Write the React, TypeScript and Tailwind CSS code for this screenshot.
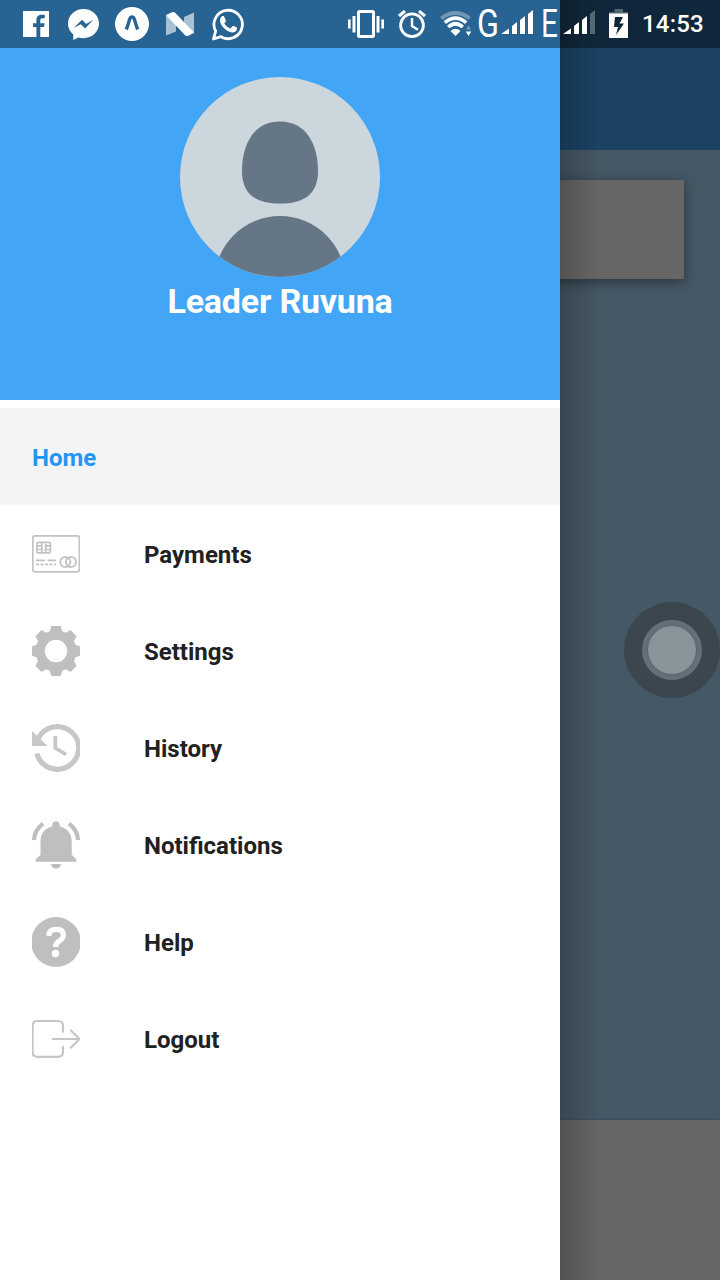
import type { ReactNode } from "react";

type GlyphProps = { box: string; className: string; children: ReactNode };

function Glyph({ box, className, children }: GlyphProps) {
  return (
    <svg viewBox={box} className={`shrink-0 ${className}`} fill="none" aria-hidden="true">
      {children}
    </svg>
  );
}

function StatusBar() {
  return (
    <header className="absolute inset-x-0 top-0 z-30 flex h-12 items-center bg-black/40 text-white">
      <Glyph box="0 0 26 26" className="ml-[23px] size-[26px]">
        <path fill="#fff" d="M0 0H26V26H17.3V16H21L21.6 12.2H17.3V9.4C17.3 8 18 7.3 19.5 7.3H21.8V4.1C21 3.9 20 3.8 18.8 3.8C15.5 3.8 13.4 5.7 13.4 9V12.2H10V16H13.4V26H0Z" />
      </Glyph>
      <Glyph box="0 0 31 31" className="ml-[19px] mt-px h-[31px] w-[31px]">
        <path fill="#fff" fillRule="evenodd" d="M15.5 0C24 0 31 6.3 31 14.6S24 29.2 15.5 29.2C13.6 29.2 12 28.9 10.4 28.4L5.3 31V25.6C2 23 0 19 0 14.6C0 6.3 7 0 15.5 0ZM5.8 18.8L14 10.8L18.2 15L25.2 10.8L17.1 19.5L12.8 15.2Z" />
      </Glyph>
      <Glyph box="0 0 34 34" className="ml-4 size-[34px]">
        <circle cx="17" cy="17" r="17" fill="#fff" />
        <path d="M11.300 22.500C13.500 17.500 14 12.500 15.500 10.500Q17 9.300 18.500 10.500C20 12.500 20.500 17.500 22.700 22.500" stroke="#286393" strokeWidth="3.4" strokeLinejoin="round" />
      </Glyph>
      <Glyph box="0 0 28 25" className="ml-[17px] h-[25px] w-7">
        <path fill="#a9c1d4" d="M0 3L10 8V19.500L0 23.500ZM18 5L28 .5V22L18 16Z" />
        <path fill="#fff" d="M0 3L6 .3Q8-.4 9.600 1.200L28 20.500L23 23.500Q20.600 24.800 18.800 23Z" />
      </Glyph>
      <Glyph box="0 0 34 34" className="-mt-px ml-[17px] size-[34px]">
        <path d="M2.500 32L4.700 24.200A14.200 14.200 0 1 1 10 29.700Z" stroke="#fff" strokeWidth="2.800" strokeLinejoin="round" />
        <path fill="#fff" d="M12 9C13 9 13.2 9.4 14.8 13.4C15 14.2 14.3 15 13.3 16.2C15 19.2 17.2 20.6 19.4 21.5L21.5 19.2C22 18.7 22.4 18.7 25.700 20.500C26.600 21 25.700 23.800 24.200 24.700C21.500 26.300 18.300 25.200 14.900 22.700C11.500 20 9 16.500 9 13.400C9 11 10.400 9 12 9Z" />
      </Glyph>

      <Glyph box="0 0 36 28" className="ml-[103px] h-7 w-9">
        <path fill="#fff" d="M4.500 6H7.500V22.500H4.500ZM28.500 6H31.500V22.500H28.500Z" />
        <path fill="#fff" d="M0 9.500H2.700V18.500H0ZM33.300 9.500H36V18.500H33.300Z" />
        <rect x="10.500" y="1.600" width="15" height="24.800" rx="1" stroke="#fff" strokeWidth="3" />
      </Glyph>
      <Glyph box="0 0 28 28" className="ml-3.5 size-7">
        <circle cx="14" cy="15.200" r="11.400" stroke="#fff" strokeWidth="2.800" />
        <path d="M14 8V16L20 19.700" stroke="#fff" strokeWidth="2.400" />
        <path d="M1 6L7 1M21 1L27 6" stroke="#fff" strokeWidth="3" />
      </Glyph>
      <Glyph box="0 0 32 26" className="ml-3.5 h-[26px] w-8">
        <path d="M1.300 7.300Q15.500-3.300 29.700 7.300" stroke="#7197b6" strokeWidth="4" />
        <path d="M4.800 11.600Q15.500 2.700 26.200 11.600M8.200 16Q15.500 9.500 22.800 16" stroke="#fff" strokeWidth="3.600" />
        <path d="M10.500 20Q15.500 15.500 20.500 20L15.500 25Z" fill="#fff" />
        <path d="M25.800 18.500L28.500 14.500L31.200 18.500Z" fill="#7197b6" />
        <path d="M25.800 20.500H31.200L28.500 25Z" fill="#fff" />
      </Glyph>
      <span className="-mr-0.5 ml-[5px] w-[26px] origin-left scale-x-[.85] text-[38px] leading-[48px]">G</span>
      <Glyph box="0 0 33 25" className="mb-1 h-[25px] w-[33px]">
        <path fill="#fff" d="M0 24L8 18.500V24ZM11 16L16 12V24H11ZM19 10L24 6V24H19ZM27 4L32 0V24H27Z" />
      </Glyph>
      <span className="ml-[7px] w-[22px] origin-left scale-x-[.78] text-[38px] leading-[48px]">E</span>
      <Glyph box="0 0 32 25" className="mb-1 h-[25px] w-8">
        <path fill="#fff" d="M0 24L8 18.500V24ZM11 16L16 12V24H11ZM19 10L24 6V24H19Z" />
        <path fill="#576873" d="M27 4L32 0V24H27Z" />
      </Glyph>
      <Glyph box="0 0 19 29" className="-mt-px ml-3.5 h-[29px] w-[19px]">
        <path fill="#536571" d="M5.500 0H14V3H19V5H0V3H5.500Z" />
        <path fill="#fff" fillRule="evenodd" d="M0 4.500H19V29H0ZM6 8L5 18H9L7 26L15 14.500H10.500L14 8Z" />
      </Glyph>
      <span className="ml-3.5 pt-px text-2xl font-medium leading-[47px] tracking-[.2px]">14:53</span>
    </header>
  );
}

function Avatar() {
  return (
    <svg viewBox="0 0 200 200" className="size-[200px] shrink-0" aria-hidden="true">
      <defs>
        <clipPath id="avatar-clip">
          <circle cx="100" cy="100" r="100" />
        </clipPath>
      </defs>
      <g clipPath="url(#avatar-clip)">
        <rect width="200" height="200" fill="#ccd6dd" />
        <path fill="#657786" d="M100 44.5C128 44.5 138 70 138 94C138 119 122 126.500 100 126.500C78 126.500 62 119 62 94C62 70 72 44.500 100 44.500Z" />
        <circle cx="100" cy="204.500" r="65.500" fill="#657786" />
      </g>
    </svg>
  );
}

const icons = {
  payments: (
    <g stroke="#c2c2c2">
      <rect x=".8" y="6.800" width="46.600" height="36" rx="2" strokeWidth="1.700" />
      <rect x="4.800" y="13.300" width="13.600" height="10.600" rx="2" strokeWidth="1.700" />
      <path d="M5 16.900H10M5 20.500H10M14 16.900H18M14 20.500H18M9.800 13.500V23.500M13.600 23.500V16.500Q13.600 15.500 15 15.500" strokeWidth="1.700" />
      <path d="M4 31.300H13M15.500 31.300H24" strokeWidth="1.700" />
      <path d="M4 35.300H24" strokeWidth="1.700" strokeDasharray="3 1.500" />
      <circle cx="33.300" cy="33" r="5.100" strokeWidth="1.800" />
      <circle cx="39" cy="33" r="5.100" strokeWidth="1.800" />
    </g>
  ),
  settings: (
    <path
      fill="#bfbfbf"
      fillRule="evenodd"
      d="M19.300 0H28.700L30.200 5.200L33.800 6.700L38.500 4L44.600 10.300L42 15L43.500 18.700L48 20.200V29.800L43.500 31.200L42 34.900L44.600 39.700L38.500 45.900L33.800 43.300L30.200 44.800L28.700 50H19.300L17.800 44.800L14.200 43.300L9.500 45.900L3.400 39.700L6 34.900L4.500 31.200L0 29.800V20.200L4.500 18.700L6 15L3.400 10.300L9.500 4L14.200 6.700L17.800 5.200ZM24 13.800A11.200 11.200 0 1 0 24 36.200A11.200 11.200 0 1 0 24 13.800Z"
    />
  ),
  history: (
    <g>
      <path d="M6 16A21.300 21.300 0 1 1 4.800 30.500" stroke="#c6c8c7" strokeWidth="5.200" />
      <path d="M0 8L15.500 23H0Z" fill="#c6c8c7" />
      <path d="M23.300 13V25L34 31.500" stroke="#c6c8c7" strokeWidth="3.800" />
    </g>
  ),
  notifications: (
    <g fill="#bfbfbf" transform="translate(0 .7)">
      <path d="M20.300 5V4.200A3.700 3.700 0 0 1 27.700 4.200V5.800C35.500 7.400 39.700 13 39.700 21V34L44.300 38.500V41H3.700V38.500L8.500 34V21C8.500 13 12.500 7.400 20.300 5.800Z" />
      <path d="M19 43.400H29Q28.400 48 24 48T19 43.400Z" />
      <path d="M11 3Q2.500 9.500 2 19.500M37 3Q45.500 9.500 46 19.500" stroke="#bfbfbf" strokeWidth="4.200" fill="none" />
    </g>
  ),
  help: (
    <g>
      <ellipse cx="24" cy="25" rx="24.800" ry="25" fill="#bfbfbf" />
      <path d="M16.800 18.800Q17 12.300 24.200 12.300Q31.500 12.300 31.500 18Q31.500 21 27.800 23.600Q23.500 26.200 23.500 30" stroke="#fff" strokeWidth="5.200" />
      <circle cx="23.500" cy="36.500" r="3.700" fill="#fff" />
    </g>
  ),
  logout: (
    <g stroke="#c6c6c6" strokeWidth="2.200" strokeLinecap="round" strokeLinejoin="round" transform="translate(0 .8)">
      <path d="M31 17V11.300Q31 6.200 26.200 6.200H5.300Q.6 6.200 .6 11.300V37.500Q.6 42 5.300 42H26.200Q31 42 31 37.500V32" />
      <path d="M21 24.200H47M39 15.600L47.500 24.200L39 32.800" />
    </g>
  ),
};

const menu: { label: string; icon: keyof typeof icons }[] = [
  { label: "Payments", icon: "payments" },
  { label: "Settings", icon: "settings" },
  { label: "History", icon: "history" },
  { label: "Notifications", icon: "notifications" },
  { label: "Help", icon: "help" },
  { label: "Logout", icon: "logout" },
];

function Drawer() {
  return (
    <aside className="absolute inset-y-0 left-0 z-20 flex w-[560px] flex-col bg-white">
      <div className="flex h-[400px] flex-col items-center bg-[#42a5f5] pt-[77px]">
        <Avatar />
        <h1 className="mt-[3px] text-[34px] font-bold leading-[42px] tracking-[-.2px] text-white">Leader Ruvuna</h1>
      </div>
      <nav className="pt-2 text-2xl font-bold text-[#212121]">
        <a className="flex h-[97px] items-center bg-[#f4f4f4] pl-8 pt-[3px] text-[#2196f3]">Home</a>
        {menu.map(({ label, icon }) => (
          <a key={label} className="flex h-[97px] items-center pl-8">
            <Glyph box="0 0 48 50" className="h-[50px] w-12">
              {icons[icon]}
            </Glyph>
            <span className="ml-16 pt-[3px]">{label}</span>
          </a>
        ))}
      </nav>
    </aside>
  );
}

export default function App() {
  return (
    <div className="relative h-[1280px] w-[720px] overflow-hidden bg-[#455865] font-['Roboto',sans-serif]">
      <main className="flex h-full flex-col">
        <div className="h-[150px] bg-[#1b4263]" />
        <div className="flex-1 px-9 pt-[30px]">
          <div className="h-[99px] bg-[#666] shadow-[0_3px_12px_rgba(0,0,0,0.42)]" />
        </div>
        <div className="h-40 bg-[#666] shadow-[0_0_3px_rgba(0,0,0,0.25)]" />
      </main>
      <div className="absolute inset-y-0 left-[560px] z-10 w-10 bg-linear-to-r from-black/20 to-transparent" />
      <Drawer />
      <StatusBar />
      <div className="absolute left-[624px] top-[602px] z-20 flex size-24 items-center justify-center rounded-full bg-[#3b464e]">
        <div className="flex size-[60px] items-center justify-center rounded-full bg-[#65717a]">
          <div className="size-12 rounded-full bg-[#89949a] shadow-[0_0_3px_#4d5960]" />
        </div>
      </div>
    </div>
  );
}
